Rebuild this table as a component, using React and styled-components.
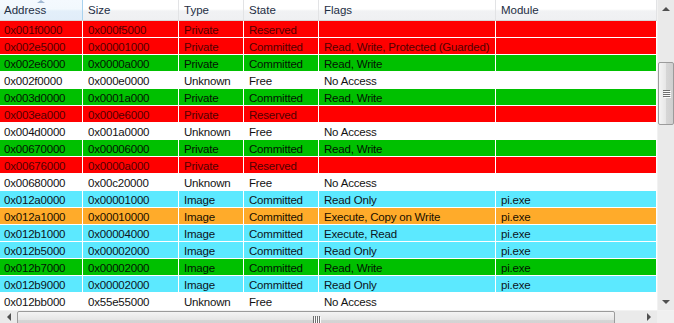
import React from "react";
import styled, { createGlobalStyle } from "styled-components";

const GlobalStyle = createGlobalStyle`
  html, body {
    margin: 0;
    padding: 0;
    background: #ffffff;
  }
  body {
    font-family: "Liberation Sans", Arial, sans-serif;
    font-size: 11.5px;
  }
`;

const COLS = "83px 96px 65px 75px 177px 161px";

const ROW_COLORS = {
  red: { bg: "#ff0000", fg: "#520000" },
  green: { bg: "#00c000", fg: "#041404" },
  cyan: { bg: "#5ce9ff", fg: "#0c1422" },
  orange: { bg: "#ffab2a", fg: "#1a1000" },
  white: { bg: "#ffffff", fg: "#121212" }
};

const regions = [
  ["0x001f0000", "0x000f5000", "Private", "Reserved", "", "", "red"],
  ["0x002e5000", "0x00001000", "Private", "Committed", "Read, Write, Protected (Guarded)", "", "red"],
  ["0x002e6000", "0x0000a000", "Private", "Committed", "Read, Write", "", "green"],
  ["0x002f0000", "0x000e0000", "Unknown", "Free", "No Access", "", "white"],
  ["0x003d0000", "0x0001a000", "Private", "Committed", "Read, Write", "", "green"],
  ["0x003ea000", "0x000e6000", "Private", "Reserved", "", "", "red"],
  ["0x004d0000", "0x001a0000", "Unknown", "Free", "No Access", "", "white"],
  ["0x00670000", "0x00006000", "Private", "Committed", "Read, Write", "", "green"],
  ["0x00676000", "0x0000a000", "Private", "Reserved", "", "", "red"],
  ["0x00680000", "0x00c20000", "Unknown", "Free", "No Access", "", "white"],
  ["0x012a0000", "0x00001000", "Image", "Committed", "Read Only", "pi.exe", "cyan"],
  ["0x012a1000", "0x00010000", "Image", "Committed", "Execute, Copy on Write", "pi.exe", "orange"],
  ["0x012b1000", "0x00004000", "Image", "Committed", "Execute, Read", "pi.exe", "cyan"],
  ["0x012b5000", "0x00002000", "Image", "Committed", "Read Only", "pi.exe", "cyan"],
  ["0x012b7000", "0x00002000", "Image", "Committed", "Read, Write", "pi.exe", "green"],
  ["0x012b9000", "0x00002000", "Image", "Committed", "Read Only", "pi.exe", "cyan"],
  ["0x012bb000", "0x55e55000", "Unknown", "Free", "No Access", "", "white"]
];

const headers = ["Address", "Size", "Type", "State", "Flags", "Module"];

const Window = styled.div`
  width: 674px;
  height: 323px;
  overflow: hidden;
  display: flex;
  flex-direction: column;
  background: #ffffff;
`;

const Main = styled.div`
  display: flex;
  height: 312px;
`;

const Grid = styled.div`
  width: 657px;
  display: flex;
  flex-direction: column;
`;

const HeaderRow = styled.div`
  display: grid;
  grid-template-columns: ${COLS};
  height: 20px;
  border-bottom: 1px solid #d5d5d5;
  background: linear-gradient(#ffffff 0%, #ffffff 45%, #f1f2f4 55%, #eff0f2 100%);
`;

const HeaderCell = styled.div`
  position: relative;
  display: flex;
  align-items: center;
  padding-left: ${(p) => (p.$first ? 4 : 5)}px;
  color: #1e2e44;
  border-right: 1px solid ${(p) => (p.$sorted ? "#a9d2ee" : "#e2e3e5")};
  background: ${(p) =>
    p.$sorted
      ? "linear-gradient(#f4f9fe 0%, #f2f8fd 45%, #e3effa 55%, #e1edf9 100%)"
      : "transparent"};
`;

const SortArrow = styled.span`
  position: absolute;
  top: 0;
  left: 37px;
  width: 0;
  height: 0;
  border-left: 4px solid transparent;
  border-right: 4px solid transparent;
  border-bottom: 3px solid #a2b9d3;
`;

const Row = styled.div`
  display: grid;
  grid-template-columns: ${COLS};
  height: 16px;
  border-bottom: 1px solid #ffffff;
  background: ${(p) => ROW_COLORS[p.$tone].bg};
  color: ${(p) => ROW_COLORS[p.$tone].fg};
`;

const Cell = styled.div`
  display: flex;
  align-items: center;
  white-space: nowrap;
  overflow: hidden;
  letter-spacing: -0.2px;
  padding-top: 2px;
  padding-left: ${(p) => (p.$first ? 4 : 5)}px;
  border-right: 1px solid #ffffff;
`;

const VScroll = styled.div`
  width: 17px;
  display: flex;
  flex-direction: column;
  background: #eaeaea;
  border-left: 1px solid #f2f2f2;
  box-sizing: border-box;
`;

const ArrowBox = styled.div`
  height: ${(p) => p.$h || 17}px;
  width: ${(p) => p.$w || 17}px;
  flex: none;
  display: flex;
  align-items: center;
  justify-content: center;
`;

const Tri = styled.span`
  width: 0;
  height: 0;
  ${(p) =>
    p.$dir === "up"
      ? "border-left: 4px solid transparent; border-right: 4px solid transparent; border-bottom: 4px solid #505050;"
      : p.$dir === "down"
      ? "border-left: 4px solid transparent; border-right: 4px solid transparent; border-top: 4px solid #505050;"
      : p.$dir === "left"
      ? "border-top: 4px solid transparent; border-bottom: 4px solid transparent; border-right: 4px solid #505050;"
      : "border-top: 4px solid transparent; border-bottom: 4px solid transparent; border-left: 4px solid #505050;"}
`;

const Track = styled.div`
  flex: 1;
  display: flex;
  flex-direction: ${(p) => (p.$horizontal ? "row" : "column")};
`;

const Spacer = styled.div`
  flex: none;
  ${(p) => (p.$horizontal ? `width: ${p.$size}px;` : `height: ${p.$size}px;`)}
`;

const Thumb = styled.div`
  flex: none;
  box-sizing: border-box;
  border: 1px solid #9b9b9b;
  border-radius: 2px;
  display: flex;
  align-items: center;
  justify-content: center;
  ${(p) =>
    p.$horizontal
      ? `width: ${p.$size}px; height: 17px; background: linear-gradient(#f4f4f4, #e6e6e6 50%, #d6d6d6 51%, #cfcfcf);`
      : `height: ${p.$size}px; width: 16px; background: linear-gradient(90deg, #f4f4f4, #e6e6e6 50%, #d6d6d6 51%, #cfcfcf);`}
`;

const Grip = styled.div`
  display: flex;
  flex-direction: ${(p) => (p.$horizontal ? "row" : "column")};
  gap: 1px;
`;

const GripLine = styled.span`
  display: block;
  background: #6e6e6e;
  box-shadow: 1px 1px 0 #fdfdfd;
  ${(p) => (p.$horizontal ? "width: 1px; height: 7px;" : "height: 1px; width: 7px;")}
`;

const HScroll = styled.div`
  height: 17px;
  flex: none;
  display: flex;
  background: #eaeaea;
  border-top: 1px solid #f2f2f2;
  box-sizing: border-box;
`;

const Corner = styled.div`
  width: 17px;
  flex: none;
  background: #f0f0f0;
`;

const GripMarks = ({ horizontal }) => (
  <Grip $horizontal={horizontal}>
    {[0, 1, 2, 3].map((i) => (
      <GripLine key={i} $horizontal={horizontal} />
    ))}
  </Grip>
);

const App = () => (
  <>
    <GlobalStyle />
    <Window>
      <Main>
        <Grid>
          <HeaderRow>
            {headers.map((h, i) => (
              <HeaderCell key={h} $first={i === 0} $sorted={i === 0}>
                {i === 0 && <SortArrow />}
                {h}
              </HeaderCell>
            ))}
          </HeaderRow>
          {regions.map((r) => (
            <Row key={r[0]} $tone={r[6]}>
              {r.slice(0, 6).map((v, i) => (
                <Cell key={i} $first={i === 0}>
                  {v}
                </Cell>
              ))}
            </Row>
          ))}
        </Grid>
        <VScroll>
          <ArrowBox $w={16}>
            <Tri $dir="up" />
          </ArrowBox>
          <Track>
            <Spacer $size={45} />
            <Thumb $size={63}>
              <GripMarks />
            </Thumb>
          </Track>
          <ArrowBox $w={16}>
            <Tri $dir="down" />
          </ArrowBox>
        </VScroll>
      </Main>
      <HScroll>
        <ArrowBox $h={11}>
          <Tri $dir="left" />
        </ArrowBox>
        <Track $horizontal>
          <Thumb $horizontal $size={598}>
            <GripMarks horizontal />
          </Thumb>
        </Track>
        <ArrowBox $h={11}>
          <Tri $dir="right" />
        </ArrowBox>
        <Corner />
      </HScroll>
    </Window>
  </>
);

export default App;
